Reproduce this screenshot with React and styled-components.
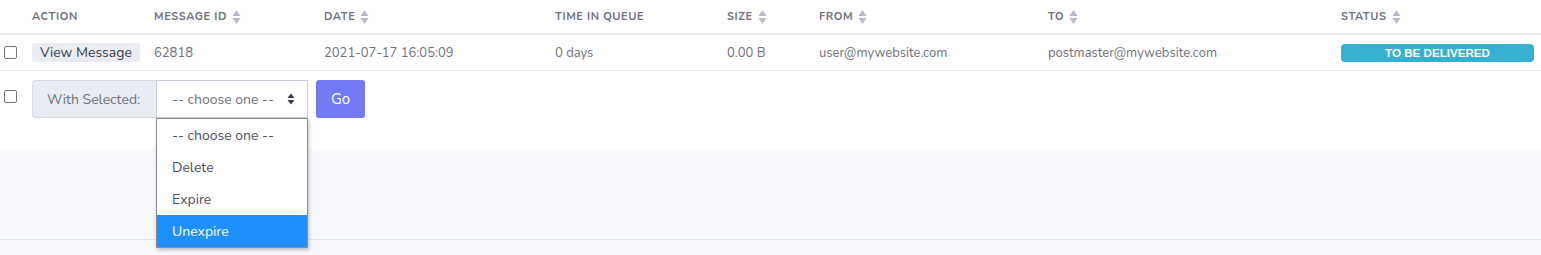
import React from "react";
import styled, { createGlobalStyle } from "styled-components";

const GlobalStyle = createGlobalStyle`
  body {
    margin: 0;
    background: #ffffff;
    font-family: "Nunito", "Lato", "Noto Sans", sans-serif;
    color: #6e707e;
  }
`;

const COLS = "32px 122px 170px 231px 172px 92px 229px 293px 1fr";

const Page = styled.div`
  width: 1541px;
  height: 255px;
  overflow: hidden;
`;

const HeadRow = styled.div`
  display: grid;
  grid-template-columns: ${COLS};
  height: 33px;
  align-items: center;
  border-bottom: 2px solid #e9ecf3;
  padding-right: 7px;
`;

const HeadCell = styled.div`
  display: flex;
  align-items: center;
  gap: 5px;
  font-size: 11px;
  font-weight: 700;
  letter-spacing: 0.6px;
  text-transform: uppercase;
  color: #6e707e;
`;

const BodyRow = styled.div`
  display: grid;
  grid-template-columns: ${COLS};
  height: 35px;
  align-items: center;
  border-bottom: 1px solid #e9ecf3;
  padding-right: 7px;
`;

const BodyCell = styled.div`
  font-size: 13px;
  color: #6e707e;
`;

const Check = styled.span`
  display: block;
  width: 11px;
  height: 11px;
  margin-left: 4px;
  margin-top: ${(p) => p.$top || 0}px;
  border: 1px solid #767676;
  border-radius: 2px;
  background: #fff;
`;

const ViewButton = styled.span`
  display: inline-block;
  padding: 2px 8px 2px 8px;
  background: #eaecf4;
  border-radius: 3px;
  font-size: 14px;
  color: #3a3b45;
  line-height: 15px;
`;

const Badge = styled.div`
  height: 18px;
  border-radius: 4px;
  background: #36b0d1;
  color: #fff;
  font-family: "Liberation Sans", Arial, sans-serif;
  font-weight: 700;
  font-size: 11.6px;
  line-height: 18px;
  text-align: center;
`;

const ActionBar = styled.div`
  display: flex;
  align-items: flex-start;
  height: 79px;
  padding-top: 9px;
  box-sizing: border-box;
`;

const InputGroup = styled.div`
  position: relative;
  display: flex;
  margin-left: 15px;
  height: 38px;
`;

const GroupLabel = styled.div`
  display: flex;
  align-items: center;
  padding: 0 14px;
  width: 124px;
  box-sizing: border-box;
  background: #eaecf4;
  border: 1px solid #d8dbe6;
  border-right: none;
  border-radius: 4px 0 0 4px;
  font-size: 14px;
  color: #6e707e;
`;

const SelectBox = styled.div`
  display: flex;
  align-items: center;
  justify-content: space-between;
  width: 152px;
  box-sizing: border-box;
  padding: 0 12px 0 15px;
  border: 1px solid #c9cfdb;
  background: #fff;
  font-size: 14px;
  color: #6e707e;
`;

const GoButton = styled.div`
  display: flex;
  align-items: center;
  justify-content: center;
  margin-left: 8px;
  width: 49px;
  height: 38px;
  border-radius: 3px;
  background: #7479f4;
  color: #fff;
  font-size: 15px;
`;

const Menu = styled.div`
  position: absolute;
  left: 124px;
  top: 38px;
  width: 152px;
  box-sizing: border-box;
  border: 1px solid #8a8d96;
  background: #fff;
  box-shadow: 1px 2px 4px rgba(0, 0, 0, 0.25);
  z-index: 5;
`;

const MenuItem = styled.div`
  height: 32px;
  display: flex;
  align-items: center;
  padding-left: 15px;
  font-size: 14px;
  color: ${(p) => (p.$active ? "#ffffff" : "#4e4f5a")};
  background: ${(p) => (p.$active ? "#1e8fff" : "transparent")};
`;

const Footer = styled.div`
  height: 105px;
  background: #f8f9fc;
`;

const FooterBody = styled.div`
  height: 89px;
  border-bottom: 1px solid #e3e6ef;
`;

function SortIcon() {
  return (
    <svg width="9" height="16" viewBox="0 0 9 16">
      <path d="M4.5 1 L8.5 7 L0.5 7 Z" fill="#b7b9cc" />
      <path d="M4.5 15 L8.5 9 L0.5 9 Z" fill="#b7b9cc" />
    </svg>
  );
}

function Caret() {
  return (
    <svg width="8" height="12" viewBox="0 0 8 12">
      <path d="M4 0.5 L7.5 5 L0.5 5 Z" fill="#3a3b45" />
      <path d="M4 11.5 L7.5 7 L0.5 7 Z" fill="#3a3b45" />
    </svg>
  );
}

const headers = [
  { label: "", sort: false },
  { label: "Action", sort: false },
  { label: "Message ID", sort: true },
  { label: "Date", sort: true },
  { label: "Time in Queue", sort: false },
  { label: "Size", sort: true },
  { label: "From", sort: true },
  { label: "To", sort: true },
  { label: "Status", sort: true },
];

const options = ["-- choose one --", "Delete", "Expire", "Unexpire"];

export default function App() {
  return (
    <Page>
      <GlobalStyle />
      <HeadRow>
        {headers.map((h, i) => (
          <HeadCell key={i}>
            {h.label}
            {h.sort && <SortIcon />}
          </HeadCell>
        ))}
      </HeadRow>
      <BodyRow>
        <BodyCell>
          <Check />
        </BodyCell>
        <BodyCell>
          <ViewButton>View Message</ViewButton>
        </BodyCell>
        <BodyCell>62818</BodyCell>
        <BodyCell>2021-07-17 16:05:09</BodyCell>
        <BodyCell>0 days</BodyCell>
        <BodyCell>0.00 B</BodyCell>
        <BodyCell>user@mywebsite.com</BodyCell>
        <BodyCell>postmaster@mywebsite.com</BodyCell>
        <BodyCell>
          <Badge>TO BE DELIVERED</Badge>
        </BodyCell>
      </BodyRow>
      <ActionBar>
        <Check $top={10} />
        <InputGroup>
          <GroupLabel>With Selected:</GroupLabel>
          <SelectBox>
            -- choose one --
            <Caret />
          </SelectBox>
          <GoButton>Go</GoButton>
          <Menu>
            {options.map((o) => (
              <MenuItem key={o} $active={o === "Unexpire"}>
                {o}
              </MenuItem>
            ))}
          </Menu>
        </InputGroup>
      </ActionBar>
      <Footer>
        <FooterBody />
      </Footer>
    </Page>
  );
}
